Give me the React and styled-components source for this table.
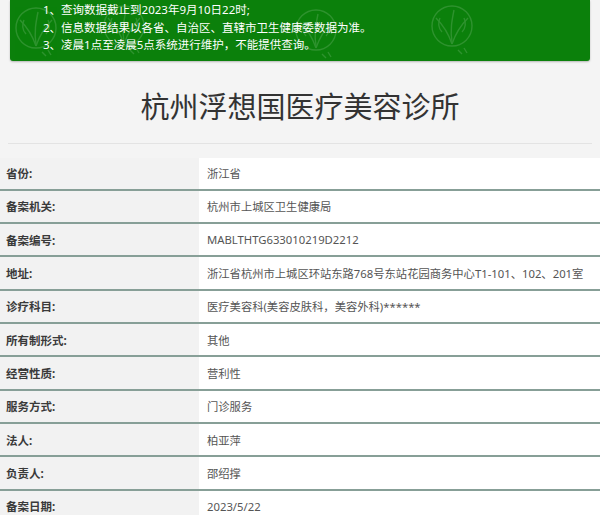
import React from 'react'
import styled, { createGlobalStyle } from 'styled-components'

const GlobalStyle = createGlobalStyle`
  html, body {
    margin: 0;
    padding: 0;
    background: #f4f4f4;
    font-family: "Noto Sans", "Noto Sans CJK SC", sans-serif;
  }
`

const Page = styled.div`
  width: 600px;
  height: 515px;
  overflow: hidden;
  background: #f4f4f4;
`

const Notice = styled.div`
  position: relative;
  overflow: hidden;
  margin: 0 10px;
  padding: 1px 0 7px 33px;
  background: #0b800b;
  border-radius: 0 0 3px 3px;
  box-shadow: 0 1px 2px rgba(0, 0, 0, 0.25);
  color: #fff;
  font-size: 11.5px;
  line-height: 17.5px;
`

const NoticeLine = styled.div`
  position: relative;
  z-index: 1;
  white-space: nowrap;
`

const Mark = styled.svg`
  position: absolute;
  top: ${p => p.$top}px;
  left: ${p => p.$left}px;
  width: 48px;
  height: 56px;
  opacity: 0.14;
`

const Title = styled.h1`
  margin: 0 8px;
  padding: 26px 0 16px;
  border-bottom: 1px solid #e3e3e3;
  text-align: center;
  font-size: 29px;
  font-weight: 400;
  line-height: 40px;
  color: #333;
`

const Table = styled.div`
  margin-top: 14px;
`

const Row = styled.div`
  display: grid;
  grid-template-columns: 199px 1fr;
  height: 33.33px;
  box-sizing: border-box;
  border-bottom: 2px solid #879f97;
`

const Label = styled.div`
  display: flex;
  align-items: center;
  padding-left: 6px;
  background: #f2f2f2;
  font-size: 11.5px;
  font-weight: 700;
  color: #3a3a3a;
`

const Value = styled.div`
  display: flex;
  align-items: center;
  padding-left: 8px;
  background: #fff;
  font-size: 11.3px;
  color: #555;
  white-space: nowrap;
`

const Emblem = ({ top, left }) => (
  <Mark $top={top} $left={left} viewBox="0 0 48 56" fill="none" stroke="#ffffff" strokeWidth="1.4">
    <circle cx="24" cy="24" r="20" />
    <path d="M24 42 C20 30 14 22 8 16" />
    <path d="M24 42 C28 30 34 22 40 16" />
    <path d="M24 40 C22 28 24 18 26 8" />
    <path d="M14 30 C10 26 10 20 12 16" />
    <path d="M34 30 C38 26 38 20 36 16" />
    <path d="M30 48 l4 4 M36 46 l3 5" />
  </Mark>
)

const notices = [
  '1、查询数据截止到2023年9月10日22时;',
  '2、信息数据结果以各省、自治区、直辖市卫生健康委数据为准。',
  '3、凌晨1点至凌晨5点系统进行维护，不能提供查询。',
]

const rows = [
  ['省份:', '浙江省'],
  ['备案机关:', '杭州市上城区卫生健康局'],
  ['备案编号:', 'MABLTHTG633010219D2212'],
  ['地址:', '浙江省杭州市上城区环站东路768号东站花园商务中心T1-101、102、201室'],
  ['诊疗科目:', '医疗美容科(美容皮肤科，美容外科)******'],
  ['所有制形式:', '其他'],
  ['经营性质:', '营利性'],
  ['服务方式:', '门诊服务'],
  ['法人:', '柏亚萍'],
  ['负责人:', '邵绍撑'],
  ['备案日期:', '2023/5/22'],
]

const App = () => {
  return (
    <Page>
      <GlobalStyle />
      <Notice>
        <Emblem top={4} left={2} />
        <Emblem top={2} left={90} />
        <Emblem top={6} left={282} />
        <Emblem top={2} left={418} />
        {notices.map(n => (
          <NoticeLine key={n}>{n}</NoticeLine>
        ))}
      </Notice>
      <Title>杭州浮想国医疗美容诊所</Title>
      <Table>
        {rows.map(([k, v]) => (
          <Row key={k}>
            <Label>{k}</Label>
            <Value>{v}</Value>
          </Row>
        ))}
      </Table>
    </Page>
  )
}

export default App
